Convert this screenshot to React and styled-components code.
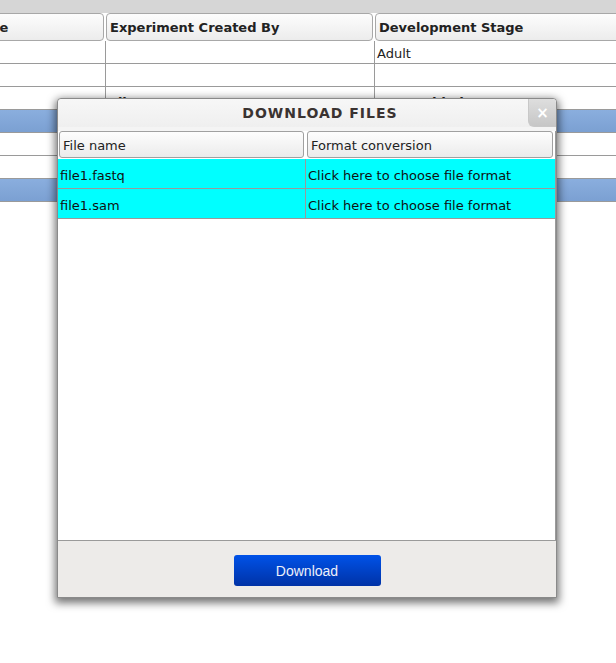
import React from 'react';
import styled, {createGlobalStyle} from 'styled-components';

const GlobalStyle = createGlobalStyle`
  html, body {
    margin: 0;
    padding: 0;
    background: #fff;
    font-family: "DejaVu Sans", "Noto Sans", sans-serif;
  }
`;

const Page = styled.div`
  position: relative;
  width: 616px;
  height: 663px;
  overflow: hidden;
  background: #fff;
`;

const TopBar = styled.div`
  height: 13px;
  background: #d6d6d6;
`;

const Grid = styled.div`
  display: grid;
  grid-template-columns: 112px 269px 1fr;
  margin-left: -6px;
  width: 630px;
`;

const HeadCell = styled.div`
  box-sizing: border-box;
  height: 28px;
  margin-right: 2px;
  padding: 6px 3px 0;
  font-size: 13px;
  font-weight: bold;
  color: #222;
  border: 1px solid #a8a8a8;
  border-radius: 4px;
  background: linear-gradient(#fdfdfd, #ececec);
  white-space: nowrap;
  overflow: hidden;
`;

const Cell = styled.div`
  box-sizing: border-box;
  height: 23px;
  padding: ${(p) => (p.bold ? '8px 3px 0' : '5px 2px 0')};
  font-size: 13px;
  font-weight: ${(p) => (p.bold ? 'bold' : 'normal')};
  color: #222;
  border-bottom: 1px solid #9a9a9a;
  border-right: ${(p) => (p.last ? '0' : '1px solid #9a9a9a')};
  background: ${(p) => (p.blue ? 'linear-gradient(#8aaede, #7ba0d2)' : '#fff')};
  white-space: nowrap;
  overflow: hidden;
`;

const Dialog = styled.div`
  position: absolute;
  left: 57px;
  top: 98px;
  width: 498px;
  height: 498px;
  display: flex;
  flex-direction: column;
  border: 1px solid #8a8a8a;
  border-radius: 4px 4px 0 0;
  background: #f4f4f4;
  box-shadow: 0 3px 9px 2px rgba(0, 0, 0, 0.55);
`;

const TitleBar = styled.div`
  position: relative;
  height: 28px;
  flex-shrink: 0;
  display: flex;
  align-items: center;
  justify-content: center;
  padding-left: 26px;
  font-size: 14px;
  font-weight: bold;
  letter-spacing: 1px;
  color: #3a3331;
  background: linear-gradient(#f7f7f7, #efefef);
  border-radius: 4px 4px 0 0;
`;

const Close = styled.div`
  position: absolute;
  right: 0;
  top: 0;
  width: 27px;
  height: 27px;
  display: flex;
  align-items: center;
  justify-content: center;
  border-left: 1px solid #c8c8c8;
  border-bottom: 1px solid #c8c8c8;
  border-radius: 0 4px 0 6px;
  background: linear-gradient(#dedede, #c6c6c6);
  color: #fff;
  font-size: 15px;
  font-weight: bold;
  letter-spacing: 0;
`;

const TableArea = styled.div`
  flex: 1;
  margin-top: 4px;
  background: #fff;
  border-bottom: 1px solid #9a9a9a;
  border-right: 1px solid #9a9a9a;
`;

const Cols = styled.div`
  display: grid;
  grid-template-columns: 248px 1fr;
`;

const FileHead = styled.div`
  box-sizing: border-box;
  height: 27px;
  margin: 0 2px 1px 1px;
  padding: 6px 3px 0;
  font-size: 13px;
  color: #222;
  border: 1px solid #a0a0a0;
  border-radius: 3px;
  background: linear-gradient(#fdfdfd, #ebebeb);
`;

const FileCell = styled.div`
  box-sizing: border-box;
  height: 30px;
  padding: 9px 2px 0;
  font-size: 13px;
  color: #111;
  background: #00ffff;
  border-bottom: 1px solid #9a9a9a;
  border-right: ${(p) => (p.last ? '0' : '1px solid #9a9a9a')};
  white-space: nowrap;
`;

const Footer = styled.div`
  height: 56px;
  flex-shrink: 0;
  display: flex;
  justify-content: center;
  padding-top: 14px;
  box-sizing: border-box;
  background: #edebe9;
`;

const Button = styled.button`
  width: 147px;
  height: 31px;
  border: 0;
  border-radius: 3px;
  background: linear-gradient(#0052e8, #0032a6);
  color: #eef0fa;
  font-family: "Liberation Sans", Arial, sans-serif;
  font-size: 14px;
  padding-top: 2px;
  cursor: pointer;
`;

const files = ['file1.fastq', 'file1.sam'];

export default function App() {
  return (
    <Page>
      <GlobalStyle/>
      <TopBar/>
      <Grid>
        <HeadCell style={{paddingLeft: 0}}>&nbsp;e</HeadCell>
        <HeadCell>Experiment Created By</HeadCell>
        <HeadCell>Development Stage</HeadCell>

        <Cell/>
        <Cell/>
        <Cell last>Adult</Cell>

        <Cell/>
        <Cell/>
        <Cell last/>

        <Cell/>
        <Cell bold>File Name</Cell>
        <Cell bold last>Date Added</Cell>

        <Cell blue/>
        <Cell blue/>
        <Cell blue last/>

        <Cell/>
        <Cell/>
        <Cell last/>

        <Cell/>
        <Cell/>
        <Cell last/>

        <Cell blue/>
        <Cell blue/>
        <Cell blue last/>
      </Grid>

      <Dialog>
        <TitleBar>
          DOWNLOAD FILES
          <Close>×</Close>
        </TitleBar>
        <TableArea>
          <Cols>
            <FileHead>File name</FileHead>
            <FileHead>Format conversion</FileHead>
            {files.map((f) => (
              <React.Fragment key={f}>
                <FileCell>{f}</FileCell>
                <FileCell last>Click here to choose file format</FileCell>
              </React.Fragment>
            ))}
          </Cols>
        </TableArea>
        <Footer>
          <Button>Download</Button>
        </Footer>
      </Dialog>
    </Page>
  );
}
